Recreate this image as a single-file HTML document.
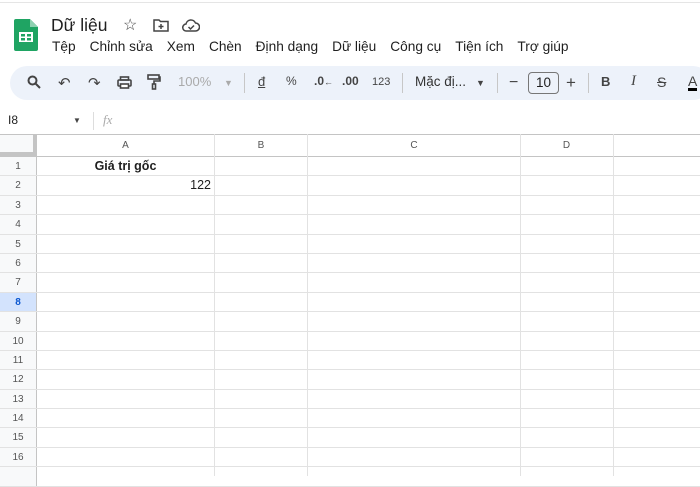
<!DOCTYPE html>
<html><head><meta charset="utf-8"><style>
*{margin:0;padding:0;box-sizing:border-box}
body{width:700px;height:476px;overflow:hidden;background:#fff;font-family:"Liberation Sans",Arial,sans-serif;position:relative;color:#1f1f1f}
.a{position:absolute}
.menu span{margin-right:14px}
.tb{position:absolute;top:66px;left:10px;width:700px;height:34px;background:#edf2fa;border-radius:17px}
.ic{position:absolute;top:74px;font-size:13px;color:#444}
.sep{position:absolute;top:73px;width:1px;height:20px;background:#c7c7c7}
.rows{position:absolute;left:0;top:157px;width:700px}
.r{height:19.4px;border-bottom:1px solid #e2e2e2;position:relative}
.rh{position:absolute;left:0;top:0;width:37px;height:100%;background:#f8f9fa;border-right:1px solid #c4c4c4;font-size:10px;color:#555;text-align:center;line-height:19px}
.vl{position:absolute;top:134px;width:1px;height:342px;background:#e2e2e2}
</style></head><body>
<div class="a" style="left:0;top:0;width:700px;height:3px;border-bottom:1px solid #e5e5e5"></div>
<svg class="a" style="left:14px;top:19px" width="24" height="32" viewBox="0 0 24 32"><path d="M2 0h14l8 8v22a2 2 0 0 1-2 2H2a2 2 0 0 1-2-2V2a2 2 0 0 1 2-2z" fill="#1fa463"/><path d="M16 0v8h8z" fill="#8ed1b1"/><rect x="5" y="13" width="14" height="10" fill="#fff"/><rect x="7" y="15" width="4" height="2.5" fill="#1fa463"/><rect x="13" y="15" width="4" height="2.5" fill="#1fa463"/><rect x="7" y="19" width="4" height="2.5" fill="#1fa463"/><rect x="13" y="19" width="4" height="2.5" fill="#1fa463"/></svg>
<div class="a" style="left:51px;top:15px;font-size:17.5px">Dữ liệu</div>
<div class="a" style="left:123px;top:15px;font-size:16px;color:#444">☆</div>
<svg class="a" style="left:153px;top:19px" width="16" height="13" viewBox="0 0 16 13" fill="none" stroke="#444" stroke-width="1.5"><path d="M1 1h5l1.5 1.5H15V12H1z"/><path d="M8 5v5M5.5 7.5h5"/></svg>
<svg class="a" style="left:182px;top:19px" width="18" height="13" viewBox="0 0 18 13" fill="none" stroke="#444" stroke-width="1.5"><path d="M4.5 12a3.5 3.5 0 0 1-.5-7A5 5 0 0 1 13.5 4a4 4 0 0 1 0 8z"/><path d="M6.5 8l2 2 3.5-3.5"/></svg>
<div class="a menu" style="left:52px;top:39px;font-size:13.7px;white-space:nowrap"><span>Tệp</span><span>Chỉnh sửa</span><span>Xem</span><span>Chèn</span><span>Định dạng</span><span>Dữ liệu</span><span>Công cụ</span><span>Tiện ích</span><span>Trợ giúp</span></div>
<div class="tb"></div>
<svg class="a" style="left:27px;top:75px" width="14" height="14" viewBox="0 0 14 14" fill="none" stroke="#444" stroke-width="2"><circle cx="5.5" cy="5.5" r="4"/><path d="M8.5 8.5l4.5 4.5"/></svg>
<div class="ic" style="left:58px;font-size:15px">↶</div>
<div class="ic" style="left:88px;font-size:15px">↷</div>
<svg class="a" style="left:117px;top:76px" width="15" height="13" viewBox="0 0 15 13" fill="none" stroke="#444" stroke-width="1.6"><rect x="3.5" y="1" width="8" height="3"/><rect x="1" y="4" width="13" height="6" rx="1"/><rect x="3.5" y="8" width="8" height="4" fill="#fff"/></svg>
<svg class="a" style="left:147px;top:74px" width="14" height="16" viewBox="0 0 14 16" fill="none" stroke="#444" stroke-width="1.6"><rect x="1" y="1" width="11" height="4"/><path d="M12 3h1v4H7v3"/><rect x="5.5" y="10" width="3" height="5"/></svg>
<div class="ic" style="left:178px;color:#aaa">100%</div>
<div class="ic" style="left:224px;color:#aaa;font-size:9px;top:78px">▼</div>
<div class="sep" style="left:244px"></div>
<div class="ic" style="left:258px;text-decoration:underline">đ</div>
<div class="ic" style="left:286px;font-size:12px">%</div>
<div class="ic" style="left:314px;font-size:12px;font-weight:bold">.0<span style="font-size:9px">←</span></div>
<div class="ic" style="left:342px;font-size:12px;font-weight:bold">.00</div>
<div class="ic" style="left:372px;font-size:11px;top:76px">123</div>
<div class="sep" style="left:402px"></div>
<div class="ic" style="left:415px;font-size:13.5px;color:#333">Mặc đị...</div>
<div class="ic" style="left:476px;font-size:9px;top:78px">▼</div>
<div class="sep" style="left:497px"></div>
<div class="ic" style="left:509px;font-size:16px;top:74px">−</div>
<div class="a" style="left:528px;top:72px;width:31px;height:22px;border:1px solid #777;border-radius:4px;font-size:13.5px;text-align:center;line-height:20px">10</div>
<div class="ic" style="left:566px;font-size:17px;top:73px">+</div>
<div class="sep" style="left:588px"></div>
<div class="ic" style="left:601px;font-weight:bold">B</div>
<div class="ic" style="left:631px;font-style:italic;font-family:'Liberation Serif',serif;font-size:15px;top:73px">I</div>
<div class="ic" style="left:657px;text-decoration:line-through;font-size:14px">S</div>
<div class="ic" style="left:688px;font-size:14px;border-bottom:3px solid #000;line-height:14px">A</div>
<div class="a" style="left:8px;top:113px;font-size:12px">I8</div>
<div class="a" style="left:73px;top:116px;font-size:8px;color:#444">▼</div>
<div class="a" style="left:93px;top:112px;width:1px;height:18px;background:#ddd"></div>
<div class="a" style="left:103px;top:112px;font-size:13px;color:#aaa;font-style:italic;font-family:'Liberation Serif',serif">fx</div>
<div class="a" style="left:0;top:134px;width:700px;height:23px;background:#fff;border-top:1px solid #c4c4c4;border-bottom:1px solid #c4c4c4"></div>
<div class="a" style="left:0;top:135px;width:37px;height:21px;background:#f8f9fa;border-right:4px solid #c4c4c4;border-bottom:4px solid #c4c4c4"></div>
<div class="a" style="left:37px;top:140px;width:177px;text-align:center;font-size:10px;color:#555">A</div>
<div class="a" style="left:214px;top:140px;width:94px;text-align:center;font-size:10px;color:#555">B</div>
<div class="a" style="left:308px;top:140px;width:212px;text-align:center;font-size:10px;color:#555">C</div>
<div class="a" style="left:520px;top:140px;width:93px;text-align:center;font-size:10px;color:#555">D</div>
<div class="rows">
<div class="r"><div class="rh">1</div><div class="a" style="left:37px;width:177px;text-align:center;font-size:12.5px;font-weight:bold;top:2px">Giá trị gốc</div></div>
<div class="r"><div class="rh">2</div><div class="a" style="left:37px;width:174px;text-align:right;font-size:12.5px;top:2px">122</div></div>
<div class="r"><div class="rh">3</div></div>
<div class="r"><div class="rh">4</div></div>
<div class="r"><div class="rh">5</div></div>
<div class="r"><div class="rh">6</div></div>
<div class="r"><div class="rh">7</div></div>
<div class="r"><div class="rh" style="background:#d3e3fd;color:#0b57d0;font-weight:bold">8</div></div>
<div class="r"><div class="rh">9</div></div>
<div class="r"><div class="rh">10</div></div>
<div class="r"><div class="rh">11</div></div>
<div class="r"><div class="rh">12</div></div>
<div class="r"><div class="rh">13</div></div>
<div class="r"><div class="rh">14</div></div>
<div class="r"><div class="rh">15</div></div>
<div class="r"><div class="rh">16</div></div>
<div class="r"><div class="rh"></div></div>
</div>
<div class="vl" style="left:214px"></div>
<div class="vl" style="left:307px"></div>
<div class="vl" style="left:520px"></div>
<div class="vl" style="left:613px"></div>
</body></html>
